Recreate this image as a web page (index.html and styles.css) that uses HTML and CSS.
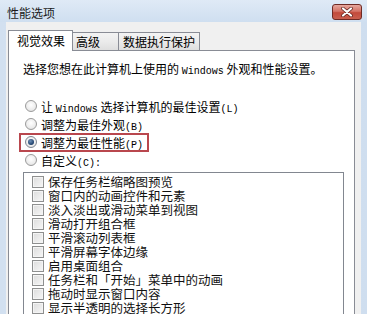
FILE: index.html
```html
<!DOCTYPE html>
<html lang="zh-CN">
<head>
<meta charset="utf-8">
<title>性能选项</title>
<link rel="stylesheet" href="styles.css">
</head>
<body>
<div class="window">
  <div class="titlebar">
    <span class="title">性能选项</span>
    <button class="close" aria-label="关闭">
      <svg width="14" height="10" viewBox="0 0 14 10">
        <path d="M3 1.5 L11 8.5 M11 1.5 L3 8.5" stroke="#5a1f1a" stroke-width="3.6" stroke-linecap="round"/>
        <path d="M3 1.5 L11 8.5 M11 1.5 L3 8.5" stroke="#ffffff" stroke-width="2.2" stroke-linecap="round"/>
      </svg>
    </button>
  </div>
  <div class="client">
    <div class="tabs">
      <div class="tab active">视觉效果</div>
      <div class="tab t2">高级</div>
      <div class="tab t3">数据执行保护</div>
    </div>
    <div class="panel">
      <p class="intro">选择您想在此计算机上使用的 <span class="lat">Windows</span> 外观和性能设置。</p>
      <div class="radios">
        <label class="radio"><span class="dot"></span><span>让 <span class="lat">Windows</span> 选择计算机的最佳设置<span class="lat">(L)</span></span></label>
        <label class="radio"><span class="dot"></span><span>调整为最佳外观<span class="lat">(B)</span></span></label>
        <label class="radio marked"><span class="dot on"></span><span>调整为最佳性能<span class="lat">(P)</span></span></label>
        <label class="radio"><span class="dot"></span><span>自定义<span class="lat">(C):</span></span></label>
      </div>
      <div class="listbox">
        <div class="item"><span class="box"></span>保存任务栏缩略图预览</div>
        <div class="item"><span class="box"></span>窗口内的动画控件和元素</div>
        <div class="item"><span class="box"></span>淡入淡出或滑动菜单到视图</div>
        <div class="item"><span class="box"></span>滑动打开组合框</div>
        <div class="item"><span class="box"></span>平滑滚动列表框</div>
        <div class="item"><span class="box"></span>平滑屏幕字体边缘</div>
        <div class="item"><span class="box"></span>启用桌面组合</div>
        <div class="item"><span class="box"></span>任务栏和「开始」菜单中的动画</div>
        <div class="item"><span class="box"></span>拖动时显示窗口内容</div>
        <div class="item"><span class="box"></span>显示半透明的选择长方形</div>
      </div>
    </div>
  </div>
</div>
</body>
</html>
```

FILE: styles.css
```css
* { box-sizing: border-box; }
html, body {
  margin: 0;
  padding: 0;
  width: 367px;
  height: 314px;
  overflow: hidden;
  background: #d6e3f2;
}
.window {
  width: 367px;
  height: 314px;
  display: flex;
  flex-direction: column;
  background: linear-gradient(90deg, #d2e0f0 0%, #dbe7f4 50%, #cfdeef 100%);
  font-family: "Noto Sans CJK SC", "Noto Sans", sans-serif;
  font-size: 12px;
  color: #000;
}
.titlebar {
  height: 22px;
  flex: none;
  display: flex;
  align-items: center;
  justify-content: space-between;
  padding: 0 5px 0 7px;
  background: linear-gradient(180deg, #dfeaf6 0%, #cfdff0 100%);
}
.title {
  font-size: 12px;
  line-height: 14px;
  color: #1b1b1b;
  margin-top: 3px;
}
.close {
  width: 30px;
  height: 16px;
  margin-top: 1px;
  padding: 0;
  border: 1px solid #6e2a24;
  border-radius: 3px;
  background: linear-gradient(180deg, #e6a79d 0%, #d47366 45%, #c24a3b 55%, #c95f4f 100%);
  display: flex;
  align-items: center;
  justify-content: center;
}
.client {
  flex: 1;
  margin: 0 6px;
  background: #f0f0f0;
  padding: 8px 6px 0 2px;
  display: flex;
  flex-direction: column;
  min-height: 0;
}
.tabs {
  display: flex;
  align-items: flex-end;
  height: 20px;
  flex: none;
  position: relative;
  z-index: 1;
}
.tab {
  height: 18px;
  border: 1px solid #898c95;
  border-bottom: none;
  background: linear-gradient(180deg, #f3f3f3 0%, #ebebeb 50%, #dedede 100%);
  display: flex;
  align-items: center;
  line-height: 14px;
  white-space: nowrap;
  flex: none;
}
.tab.active {
  height: 21px;
  margin-bottom: -1px;
  background: #fff;
  padding: 0 7px 0 8px;
  width: 65px;
  position: relative;
  z-index: 2;
}
.tab.t2 {
  width: 47px;
  padding-left: 3px;
  margin-left: -1px;
}
.tab.t3 {
  width: 82px;
  padding-left: 4px;
  margin-left: -1px;
}
.panel {
  flex: 1;
  background: #fff;
  border: 1px solid #898c95;
  border-bottom: none;
  padding: 11px 10px 0 14px;
  min-height: 0;
  overflow: hidden;
}
.intro {
  margin: 0;
  line-height: 14px;
  height: 14px;
  white-space: nowrap;
}
.lat {
  font-family: "Liberation Mono", monospace;
  font-size: 10px;
}
.radios {
  margin-top: 21px;
  display: flex;
  flex-direction: column;
}
.radio {
  height: 18px;
  display: flex;
  align-items: center;
  gap: 4px;
  padding-left: 2px;
  white-space: nowrap;
  align-self: flex-start;
  position: relative;
}
.dot {
  width: 12px;
  height: 12px;
  border-radius: 50%;
  border: 1px solid #9a9a9a;
  background: radial-gradient(circle at 50% 40%, #ffffff 0%, #ececec 60%, #d6d6d6 100%);
  flex: none;
  position: relative;
}
.dot.on {
  border-color: #7f8792;
}
.dot.on::after {
  content: "";
  position: absolute;
  left: 2px;
  top: 2px;
  width: 6px;
  height: 6px;
  border-radius: 50%;
  background: radial-gradient(circle at 40% 35%, #6d8fb6 0%, #1c3f6a 70%, #122a48 100%);
}
.radio.marked::after {
  content: "";
  position: absolute;
  left: -4px;
  right: -6px;
  top: 0;
  bottom: -1px;
  border: 2px solid #b9474e;
}
.listbox {
  margin-top: 3px;
  border: 1px solid #828790;
  border-bottom: none;
  padding-top: 2px;
  height: 200px;
}
.item {
  height: 14px;
  display: flex;
  align-items: center;
  padding-left: 8px;
  gap: 4px;
  font-size: 12.5px;
  line-height: 14px;
  white-space: nowrap;
  color: #111;
}
.box {
  width: 12px;
  height: 12px;
  border: 1px solid #8e8f8f;
  background: linear-gradient(135deg, #dcdcdc 0%, #ececec 60%, #f6f6f6 100%);
  box-shadow: inset 0 0 0 1px #f4f4f4;
  flex: none;
}
```
